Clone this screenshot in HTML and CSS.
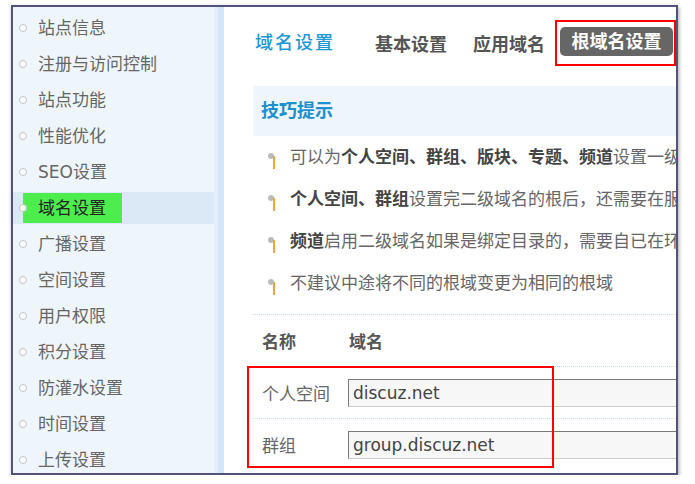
FILE: index.html
```html
<!DOCTYPE html>
<html lang="zh-CN">
  <head>
    <meta charset="UTF-8" />
    <title>域名设置</title>
    <link rel="stylesheet" href="styles.css">
  </head>
  <body>
    <div class="frame">
      <ul class="side-menu">
        <li>站点信息</li>
        <li>注册与访问控制</li>
        <li>站点功能</li>
        <li>性能优化</li>
        <li>SEO设置</li>
        <li class="active"><span class="mark">域名设置</span></li>
        <li>广播设置</li>
        <li>空间设置</li>
        <li>用户权限</li>
        <li>积分设置</li>
        <li>防灌水设置</li>
        <li>时间设置</li>
        <li>上传设置</li>
      </ul>
      <div class="side-strip"></div>

      <div class="main">
        <div class="page-head">
          <h2 class="page-title">域名设置</h2>
          <a class="tab">基本设置</a>
          <a class="tab">应用域名</a>
          <span class="note-box"><a class="tab current">根域名设置</a></span>
        </div>

        <div class="tips-title">技巧提示</div>
        <ul class="tips">
          <li>可以为<b>个人空间、群组、版块、专题、频道</b>设置一级域名的根</li>
          <li><b>个人空间、群组</b>设置完二级域名的根后，还需要在服务器上做相应配置</li>
          <li><b>频道</b>启用二级域名如果是绑定目录的，需要自已在环境中设置</li>
          <li>不建议中途将不同的根域变更为相同的根域</li>
        </ul>

        <div class="domain-table">
          <div class="row head">
            <span class="col-name">名称</span>
            <span class="col-value">域名</span>
          </div>
          <div class="row">
            <span class="col-name">个人空间</span>
            <input class="text-input" type="text" value="discuz.net">
          </div>
          <div class="row">
            <span class="col-name">群组</span>
            <input class="text-input" type="text" value="group.discuz.net">
          </div>
          <div class="note-rows"></div>
        </div>
      </div>
    </div>
  </body>
</html>
```

FILE: styles.css
```css
body {
  margin: 0;
  background: #fff;
  font-family: "DejaVu Sans", "Noto Sans CJK SC", sans-serif;
  font-size: 17px;
  color: #666;
}

.frame {
  box-sizing: border-box;
  width: 667px;
  height: 470px;
  margin: 5px 0 0 11px;
  border: 2px solid #52527f;
  box-shadow: 1px 2px 4px rgba(0, 0, 0, 0.35);
  display: flex;
  overflow: hidden;
}

/* left menu */
.side-menu {
  list-style: none;
  margin: 0;
  padding: 5px 0 0;
  width: 201px;
  flex-shrink: 0;
  background-color: #eff6fb;
}

.side-menu li {
  position: relative;
  height: 32px;
  line-height: 32px;
  margin-bottom: 4px;
  padding-left: 25px;
  white-space: nowrap;
}

.side-menu li::before {
  content: "";
  position: absolute;
  left: 6px;
  top: 12px;
  width: 6px;
  height: 6px;
  border: 1px solid #c4c4c4;
  border-radius: 50%;
  background: #fff;
}

.side-menu li.active {
  background-color: #dbe9f7;
}

.side-menu .mark {
  display: inline-block;
  margin-left: -15px;
  padding: 0 16px 0 15px;
  height: 30px;
  line-height: 30px;
  margin-top: 1px;
  vertical-align: top;
  background-color: #4ded4d;
  color: #222;
}

.side-strip {
  width: 10px;
  flex-shrink: 0;
  background: linear-gradient(to right, #e3eef9 0, #e3eef9 4px, #d3e5f6 4px);
}

/* main area */
.main {
  flex: 1;
  min-width: 0;
  padding: 0 0 0 29px;
  overflow: hidden;
}

.page-head {
  display: flex;
  align-items: center;
  height: 62px;
  padding-top: 9px;
  box-sizing: border-box;
  margin-bottom: 17px;
}

.page-title {
  margin: 0 0 4px 2px;
  font-size: 18px;
  font-weight: 500;
  letter-spacing: 2px;
  color: #1e98d5;
  width: 121px;
}

.tab {
  font-size: 18px;
  font-weight: bold;
  color: #555;
  margin-right: 26px;
  white-space: nowrap;
}

.note-box {
  margin-left: -16px;
  padding: 5px 1px 8px 3px;
  border: 2px solid #f00;
}

.tab.current {
  display: block;
  margin: 0;
  width: 113px;
  height: 29px;
  line-height: 29px;
  text-align: center;
  border-radius: 5px;
  background-color: #666;
  color: #fff;
}

.tips-title {
  height: 50px;
  line-height: 50px;
  padding-left: 8px;
  background-color: #eef6fc;
  font-size: 18px;
  font-weight: bold;
  color: #1e8fcf;
  white-space: nowrap;
}

.tips {
  list-style: none;
  margin: 0;
  padding: 0;
}

.tips li {
  position: relative;
  height: 42px;
  line-height: 42px;
  padding-left: 37px;
  white-space: nowrap;
}

.tips li b {
  color: #444;
}

.tips li::before {
  content: "";
  position: absolute;
  left: 15px;
  top: 17px;
  width: 6px;
  height: 6px;
  border-radius: 50%;
  background: #bbb;
}

.tips li::after {
  content: "";
  position: absolute;
  left: 20px;
  top: 20px;
  width: 2px;
  height: 13px;
  background: #f7a33a;
}

/* domain table */
.domain-table {
  position: relative;
  margin-top: 10px;
}

.row {
  display: flex;
  align-items: center;
  height: 51px;
  border-top: 1px dotted #c8dcef;
  white-space: nowrap;
}

.row:last-of-type {
  border-bottom: 1px dotted #c8dcef;
}

.row.head {
  font-weight: bold;
  color: #555;
}

.col-name {
  width: 86px;
  padding-left: 9px;
  flex-shrink: 0;
}

.row.head .col-value {
  margin-left: 1px;
}

.text-input {
  box-sizing: border-box;
  width: 420px;
  height: 28px;
  padding: 0 4px;
  flex-shrink: 0;
  border: 1px solid #ccc;
  border-top-color: #7a7a7a;
  border-left-color: #7a7a7a;
  background-color: #f7f7f7;
  font-family: "DejaVu Sans", sans-serif;
  font-size: 17px;
  color: #444;
}

.note-rows {
  position: absolute;
  left: -6px;
  top: 52px;
  width: 303px;
  height: 98px;
  border: 2px solid #f00;
}
```
